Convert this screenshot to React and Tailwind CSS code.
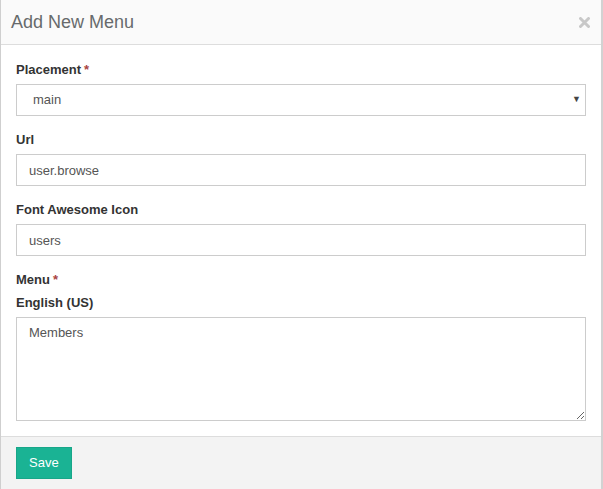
import { useState } from "react";

function Label({ children, required, className = "" }) {
  return (
    <label className={`block text-[13px] leading-[18px] font-bold text-[#333] mb-[5px] ${className}`}>
      {children}
      {required && <span className="text-[#a94442] ml-[3px]">*</span>}
    </label>
  );
}

const inputCls =
  "block w-full h-[32px] border border-[#cccccc] bg-white px-[12px] text-[13px] text-[#555] outline-none";

export default function App() {
  const [placement, setPlacement] = useState("main");
  const [url, setUrl] = useState("user.browse");
  const [icon, setIcon] = useState("users");
  const [menu, setMenu] = useState("Members");

  return (
    <div
      className="w-[603px] h-[489px] overflow-hidden bg-white border-l border-l-[#cfcfcf] border-r-2 border-r-[#d2d2d2] flex flex-col"
      style={{ fontFamily: '"Liberation Sans", Arial, sans-serif' }}
    >
      {/* Header */}
      <div className="h-[45px] shrink-0 bg-[#fafafa] border-b border-[#dddddd] flex items-center justify-between pl-[10px] pr-[11px]">
        <h4 className="text-[18px] text-[#676a6c] leading-none">Add New Menu</h4>
        <button type="button" className="text-[#c8c8c8]">
          <svg width="11" height="11" viewBox="0 0 11 11">
            <path d="M1.5 1.5 L9.5 9.5 M9.5 1.5 L1.5 9.5" stroke="currentColor" strokeWidth="3" strokeLinecap="round" />
          </svg>
        </button>
      </div>

      {/* Body */}
      <div className="flex-1 px-[15px] pt-[16px]">
        <div className="mb-[15px]">
          <Label required>Placement</Label>
          <div className="relative">
            <select
              value={placement}
              onChange={(e) => setPlacement(e.target.value)}
              className={`${inputCls} appearance-none pl-[16px]`}
            >
              <option value="main">main</option>
              <option value="footer">footer</option>
            </select>
            <span className="absolute right-[5px] top-[9px] text-[9px] text-[#444] pointer-events-none">▼</span>
          </div>
        </div>

        <div className="mb-[15px]">
          <Label>Url</Label>
          <input className={inputCls} value={url} onChange={(e) => setUrl(e.target.value)} />
        </div>

        <div className="mb-[15px]">
          <Label>Font Awesome Icon</Label>
          <input className={inputCls} value={icon} onChange={(e) => setIcon(e.target.value)} />
        </div>

        <div>
          <Label required>Menu</Label>
          <Label>English (US)</Label>
          <textarea
            className="block w-full h-[104px] border border-[#cccccc] bg-white px-[12px] py-[6px] text-[13px] leading-[18px] text-[#555] outline-none"
            value={menu}
            onChange={(e) => setMenu(e.target.value)}
          />
        </div>
      </div>

      {/* Footer */}
      <div className="h-[53px] shrink-0 bg-[#f3f3f3] border-t border-[#dddddd] px-[15px] pt-[10px]">
        <button
          type="button"
          className="h-[32px] px-[12px] bg-[#1ab394] border border-[#18a689] text-white text-[13px]"
        >
          Save
        </button>
      </div>
    </div>
  );
}
